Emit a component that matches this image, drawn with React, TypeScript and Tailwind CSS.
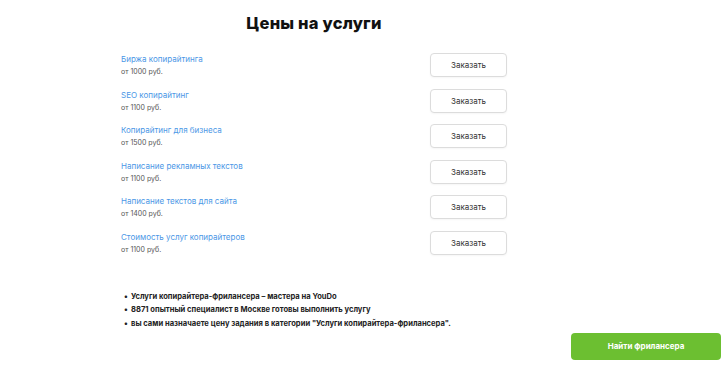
import React from 'react';

const services = [
  { name: 'Биржа копирайтинга', price: 'от 1000 руб.' },
  { name: 'SEO копирайтинг', price: 'от 1100 руб.' },
  { name: 'Копирайтинг для бизнеса', price: 'от 1500 руб.' },
  { name: 'Написание рекламных текстов', price: 'от 1100 руб.' },
  { name: 'Написание текстов для сайта', price: 'от 1400 руб.' },
  { name: 'Стоимость услуг копирайтеров', price: 'от 1100 руб.' },
];

const facts = [
  'Услуги копирайтера-фрилансера – мастера на YouDo',
  '8871 опытный специалист в Москве готовы выполнить услугу',
  'вы сами назначаете цену задания в категории "Услуги копирайтера-фрилансера".',
];

const App: React.FC = () => {
  return (
    <div className="w-[728px] h-[368px] bg-white font-['Inter','Noto_Sans',sans-serif] flex flex-col">
      <section className="ml-[121px] w-[386px] flex flex-col">
        <h1 className="mt-[12px] text-center text-[16.5px] leading-[22px] font-extrabold text-[#111] tracking-[0.2px]">
          Цены на услуги
        </h1>

        <ul className="mt-[19px] flex flex-col gap-[11.5px]">
          {services.map((s, i) => (
            <li key={i} className="flex items-center justify-between h-6">
              <div className="flex flex-col">
                <a className="text-[8px] leading-[10px] text-[#4b97e6] cursor-pointer">{s.name}</a>
                <span className="mt-[3px] text-[7px] leading-[9px] text-[#555]">{s.price}</span>
              </div>
              <button className="w-[77px] h-6 border border-[#dcdcdc] rounded-[4px] bg-white text-[8px] text-[#333] shadow-[0_1px_2px_rgba(0,0,0,0.04)]">
                Заказать
              </button>
            </li>
          ))}
        </ul>

        <ul className="mt-[37px] ml-[3px] flex flex-col gap-[4.5px]">
          {facts.map((f, i) => (
            <li key={i} className="flex items-center text-[7.6px] leading-[9px] font-bold text-[#222]">
              <span className="w-[7px] text-[8px]">•</span>
              {f}
            </li>
          ))}
        </ul>
      </section>

      <div className="flex justify-end pr-[7px] mt-[5px]">
        <button className="w-[150px] h-[27px] rounded-[4px] bg-[#6cbf31] text-white text-[8px] font-bold">
          Найти фрилансера
        </button>
      </div>
    </div>
  );
};

export default App;
